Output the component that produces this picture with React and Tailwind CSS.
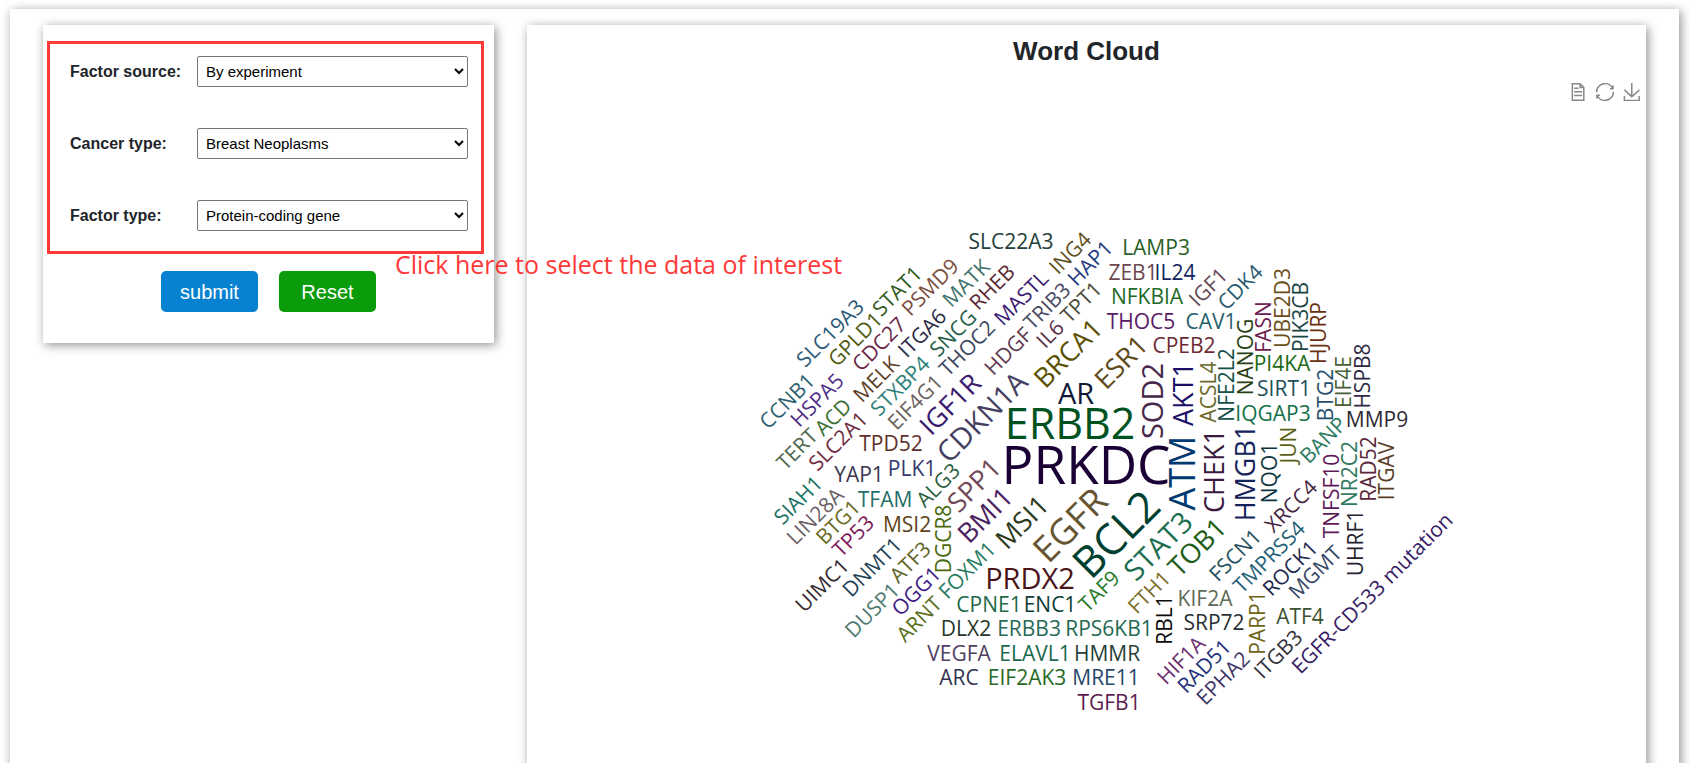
const FIELDS = [
  { id: 'factor-source', label: 'Factor source:', options: ['By experiment', 'By prediction'] },
  { id: 'cancer-type', label: 'Cancer type:', options: ['Breast Neoplasms', 'Lung Neoplasms'] },
  { id: 'factor-type', label: 'Factor type:', options: ['Protein-coding gene', 'miRNA', 'lncRNA'] },
]

// [text, centre x, centre y, rotation, font size, colour]
const WORDS = [
  ['PRKDC', 1087, 465, 0, 53, '#1a0035'],
  ['ERBB2', 1071, 424, 0, 43, '#00521f'],
  ['BCL2', 1117, 534, -45, 43, '#004030'],
  ['EGFR', 1071, 525, -45, 36, '#675432'],
  ['ATM', 1183, 473, -90, 36, '#003870'],
  ['AR', 1077, 394, 0, 29, '#0f1838'],
  ['PRDX2', 1031, 579, 0, 29, '#4a1518'],
  ['SOD2', 1154, 401, -90, 29, '#45284a'],
  ['CDKN1A', 983, 417, -45, 29, '#454062'],
  ['STAT3', 1159, 546, -45, 29, '#1c6e50'],
  ['BRCA1', 1069, 353, -45, 27, '#5a5000'],
  ['ESR1', 1122, 362, -45, 27, '#5f4a1a'],
  ['AKT1', 1184, 394, -90, 27, '#1a0f66'],
  ['IGF1R', 951, 404, -45, 27, '#3a1a6e'],
  ['SPP1', 975, 485, -45, 27, '#704858'],
  ['BMI1', 986, 515, -45, 27, '#4a2260'],
  ['MSI1', 1023, 522, -45, 27, '#2d3a1c'],
  ['TOB1', 1198, 547, -45, 27, '#205a15'],
  ['CHEK1', 1215, 471, -90, 27, '#3a1a40'],
  ['HMGB1', 1246, 473, -90, 27, '#14245a'],
  ['SLC19A3', 831, 333, -45, 21, '#2b5a78'],
  ['GPLD1', 856, 339, -45, 21, '#4f5a10'],
  ['STAT1', 898, 291, -45, 21, '#2f5a1c'],
  ['PSMD9', 931, 287, -45, 21, '#7a4f40'],
  ['MATK', 967, 283, -45, 21, '#3f736b'],
  ['RHEB', 993, 287, -45, 21, '#5a2a32'],
  ['CDC27', 880, 344, -45, 21, '#6b2545'],
  ['ITGA6', 923, 333, -45, 21, '#2a2a45'],
  ['SNCG', 954, 333, -45, 21, '#1f5c45'],
  ['MELK', 877, 379, -45, 21, '#5c4028'],
  ['STXBP4', 901, 386, -45, 21, '#2b7f78'],
  ['EIF4G1', 916, 402, -45, 21, '#6a625c'],
  ['THOC2', 968, 348, -45, 21, '#3a4560'],
  ['CCNB1', 788, 401, -45, 21, '#2b5f6e'],
  ['HSPA5', 818, 400, -45, 21, '#4f2f85'],
  ['ACD', 834, 417, -45, 21, '#3a7033'],
  ['TERT', 798, 449, -45, 21, '#4f6a50'],
  ['SLC2A1', 839, 441, -45, 21, '#6e2a40'],
  ['TPD52', 892, 443, 0, 21, '#5e3028'],
  ['YAP1', 860, 474, 0, 21, '#3b3650'],
  ['PLK1', 913, 468, 0, 21, '#343a6e'],
  ['TFAM', 886, 499, 0, 21, '#1f706a'],
  ['ALG3', 939, 485, -45, 21, '#2a6040'],
  ['MSI2', 908, 524, 0, 21, '#5e4318'],
  ['DGCR8', 944, 539, -90, 21, '#4a6a10'],
  ['SIAH1', 799, 500, -45, 21, '#1a7263'],
  ['LIN28A', 816, 516, -45, 21, '#6a5f66'],
  ['BTG1', 839, 522, -45, 21, '#6a6a20'],
  ['TP53', 854, 536, -45, 21, '#80195a'],
  ['UIMC1', 823, 585, -45, 21, '#352a30'],
  ['DNMT1', 873, 567, -45, 21, '#1f4358'],
  ['ATF3', 911, 562, -45, 21, '#5f6428'],
  ['DUSP1', 873, 610, -45, 21, '#4f7a70'],
  ['OGG1', 917, 591, -45, 21, '#3d1a85'],
  ['ARNT', 920, 619, -45, 21, '#5a6e20'],
  ['FOXM1', 968, 570, -45, 21, '#287a60'],
  ['CPNE1', 990, 604, 0, 21, '#1f6a48'],
  ['ENC1', 1051, 604, 0, 21, '#0f3d35'],
  ['TAF9', 1100, 591, -45, 21, '#267a28'],
  ['FTH1', 1150, 592, -45, 21, '#7a7028'],
  ['RBL1', 1165, 620, -90, 21, '#0c0c0c'],
  ['DLX2', 967, 628, 0, 21, '#28362a'],
  ['ERBB3', 1030, 628, 0, 21, '#286a58'],
  ['RPS6KB1', 1110, 628, 0, 21, '#1f6a50'],
  ['VEGFA', 960, 653, 0, 21, '#4f3f62'],
  ['ELAVL1', 1036, 653, 0, 21, '#1a6850'],
  ['HMMR', 1108, 653, 0, 21, '#2a3f38'],
  ['ARC', 960, 677, 0, 21, '#33334f'],
  ['EIF2AK3', 1028, 677, 0, 21, '#2a6a25'],
  ['MRE11', 1107, 677, 0, 21, '#27486a'],
  ['TGFB1', 1110, 702, 0, 21, '#5c1c50'],
  ['KIF2A', 1206, 598, 0, 21, '#5f6a58'],
  ['SRP72', 1215, 622, 0, 21, '#2a2f33'],
  ['PARP1', 1258, 623, -90, 21, '#6e6418'],
  ['ATF4', 1301, 616, 0, 21, '#3d5230'],
  ['ITGB3', 1279, 654, -45, 21, '#33333a'],
  ['EGFR-CD533 mutation', 1373, 593, -45, 21, '#372065'],
  ['HIF1A', 1182, 660, -45, 21, '#6e2f70'],
  ['RAD51', 1205, 666, -45, 21, '#22307a'],
  ['EPHA2', 1224, 678, -45, 21, '#3f3566'],
  ['FSCN1', 1236, 555, -45, 21, '#24505a'],
  ['TMPRSS4', 1270, 557, -45, 21, '#1f5f78'],
  ['ROCK1', 1291, 568, -45, 21, '#22284f'],
  ['MGMT', 1316, 572, -45, 21, '#344668'],
  ['XRCC4', 1292, 506, -45, 21, '#46263f'],
  ['NQO1', 1270, 473, -90, 21, '#0c3540'],
  ['JUN', 1289, 445, -90, 21, '#5a6218'],
  ['BANP', 1324, 440, -45, 21, '#2a7a60'],
  ['TNFSF10', 1332, 496, -90, 21, '#5f1a58'],
  ['NR2C2', 1350, 474, -90, 21, '#2f7a60'],
  ['RAD52', 1369, 469, -90, 21, '#5a2a3a'],
  ['ITGAV', 1387, 471, -90, 21, '#5a4028'],
  ['UHRF1', 1356, 543, -90, 21, '#262230'],
  ['LAMP3', 1157, 247, 0, 21, '#2a5f28'],
  ['ZEB1', 1134, 272, 0, 21, '#6e4850'],
  ['IL24', 1176, 272, 0, 21, '#14245f'],
  ['NFKBIA', 1148, 296, 0, 21, '#226a28'],
  ['THOC5', 1142, 321, 0, 21, '#5a1a66'],
  ['CPEB2', 1185, 345, 0, 21, '#6e2a30'],
  ['CAV1', 1212, 321, 0, 21, '#26606e'],
  ['IGF1', 1209, 287, -45, 21, '#5f4a55'],
  ['CDK4', 1241, 287, -45, 21, '#285a6e'],
  ['UBE2D3', 1283, 308, -90, 21, '#6a4f1a'],
  ['PIK3CB', 1301, 317, -90, 21, '#1a4545'],
  ['HJURP', 1319, 333, -90, 21, '#6a3010'],
  ['FASN', 1264, 327, -90, 21, '#6a2050'],
  ['NANOG', 1246, 357, -90, 21, '#283f14'],
  ['PI4KA', 1283, 363, 0, 21, '#1a6a14'],
  ['SIRT1', 1285, 388, 0, 21, '#23505a'],
  ['IQGAP3', 1274, 413, 0, 21, '#14704a'],
  ['BTG2', 1326, 395, -90, 21, '#26506e'],
  ['EIF4E', 1344, 382, -90, 21, '#4a6038'],
  ['HSPB8', 1363, 376, -90, 21, '#2f2a48'],
  ['MMP9', 1378, 419, 0, 21, '#2f2a35'],
  ['NFE2L2', 1227, 385, -90, 21, '#145048'],
  ['ACSL4', 1209, 392, -90, 21, '#6a6a2a'],
  ['SLC22A3', 1012, 241, 0, 21, '#24403c'],
  ['ING4', 1071, 253, -45, 21, '#5f5020'],
  ['HAP1', 1091, 263, -45, 21, '#223a80'],
  ['MASTL', 1022, 298, -45, 21, '#3a1a70'],
  ['TRIB3', 1048, 306, -45, 21, '#4a4a62'],
  ['IL6', 1051, 334, -45, 21, '#5a3048'],
  ['TPT1', 1082, 302, -45, 21, '#4a4a38'],
  ['HDGF', 1009, 351, -45, 21, '#5f3a50'],
]

const TOOLS = [
  {
    label: 'Data view',
    viewBox: '0 0 62 60',
    path: 'M17.5,17.3H33 M45.4,29.5h-28 M11.5,2v56H51V14.8L38.4,2H11.5z M38.4,2.2v12.7H51 M45.4,41.7h-28',
  },
  {
    label: 'Restore',
    viewBox: '0 0 60 60',
    path: 'M47,18.9h9.8V8.7 M56.3,20.1C52.1,9,40.5,0.6,26.8,2.1C12.6,3.7,1.6,16.2,2.1,30.6 M13,41.1H3.1v10.2 M3.7,39.9c4.2,11.1,15.8,19.5,29.5,18c14.2-1.6,25.2-14.1,24.7-28.5',
  },
  {
    label: 'Save as image',
    viewBox: '0 0 60 60',
    path: 'M4.7,22.9L29.3,45.5L54.7,23.4 M4.6,43.6L4.6,58L53.8,58L53.8,43.6 M29.2,45.1L29.2,0',
  },
]

function FilterPanel() {
  return (
    <form
      className="relative min-w-0 flex-[27] bg-white pt-4 pb-[31px] shadow-[2px_2px_10px_#909090]"
      onSubmit={(e) => e.preventDefault()}
    >
      <div className="mr-[10px] ml-1 flex flex-col gap-[41px] border-3 border-[#ff3838] pt-3 pr-[13px] pb-5 pl-5">
        {FIELDS.map((f) => (
          <div key={f.id} className="flex items-center justify-between">
            <label htmlFor={f.id} className="text-base font-bold whitespace-nowrap">
              {f.label}
            </label>
            <select
              id={f.id}
              className="h-[31px] w-[271px] rounded-[2px] border border-[#767676] bg-white px-1 text-[15px] text-black"
            >
              {f.options.map((o) => (
                <option key={o}>{o}</option>
              ))}
            </select>
          </div>
        ))}
      </div>
      <div className="mt-[17px] flex justify-center gap-[21px] text-xl text-white">
        <button type="submit" className="h-[41px] w-[97px] rounded-[5px] bg-[#0882d0]">
          submit
        </button>
        <button type="reset" className="h-[41px] w-[97px] rounded-[5px] bg-[#0a9c0a]">
          Reset
        </button>
      </div>
      <p className="absolute top-[222px] left-[352px] z-10 font-['Open_Sans',sans-serif] text-[25px] leading-[34px] whitespace-nowrap text-[#ff3838]">
        Click here to select the data of interest
      </p>
    </form>
  )
}

function WordCloudPanel() {
  return (
    <section className="min-w-0 flex-[67] bg-white pb-24 shadow-[2px_2px_10px_#909090]">
      <h1 className="pt-[10px] text-center text-[26px] leading-[32px] font-bold">Word Cloud</h1>
      <div className="flex justify-end gap-[9px] pt-4 pr-[5px]">
        {TOOLS.map((t) => (
          <button key={t.label} type="button" aria-label={t.label}>
            <svg viewBox={t.viewBox} className="size-[18px] fill-none stroke-[#888] stroke-[1.5]">
              <path d={t.path} vectorEffect="non-scaling-stroke" />
            </svg>
          </button>
        ))}
      </div>
      <svg
        viewBox="528 101 1119 661"
        className="w-full font-['Open_Sans',sans-serif]"
        role="img"
        aria-label="Word Cloud"
      >
        {WORDS.map(([text, x, y, angle, size, color]) => (
          <text
            key={text}
            transform={`translate(${x} ${y}) rotate(${angle})`}
            dy="0.357em"
            textAnchor="middle"
            fontSize={size}
            fill={color}
          >
            {text}
          </text>
        ))}
      </svg>
    </section>
  )
}

export default function App() {
  return (
    <div className="h-screen overflow-hidden bg-white font-['Liberation_Sans',Arial,sans-serif] text-[#212529]">
      <main className="mt-[9px] mr-[11px] ml-[10px] flex items-start gap-[33px] bg-white px-[33px] pt-4 shadow-[2px_2px_10px_#909090]">
        <FilterPanel />
        <WordCloudPanel />
      </main>
    </div>
  )
}
